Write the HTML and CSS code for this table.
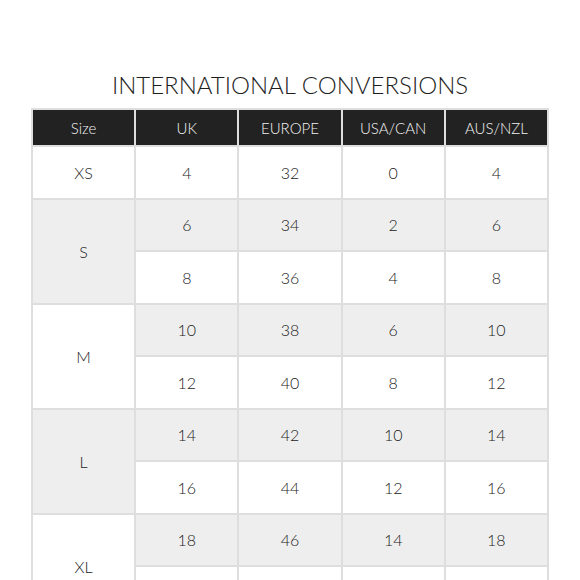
FILE: index.html
```html
<!DOCTYPE html>
<html>
<head>
<meta charset="utf-8">
<link rel="stylesheet" href="styles.css">
</head>
<body>
<h1 class="title">INTERNATIONAL CONVERSIONS</h1>
<table class="chart">
  <thead>
    <tr><th>Size</th><th>UK</th><th>EUROPE</th><th>USA/CAN</th><th>AUS/NZL</th></tr>
  </thead>
  <tbody>
    <tr><td class="size">XS</td><td>4</td><td>32</td><td>0</td><td>4</td></tr>
    <tr class="shade"><td class="size shade" rowspan="2">S</td><td>6</td><td>34</td><td>2</td><td>6</td></tr>
    <tr><td>8</td><td>36</td><td>4</td><td>8</td></tr>
    <tr class="shade"><td class="size plain" rowspan="2">M</td><td>10</td><td>38</td><td>6</td><td>10</td></tr>
    <tr><td>12</td><td>40</td><td>8</td><td>12</td></tr>
    <tr class="shade"><td class="size shade" rowspan="2">L</td><td>14</td><td>42</td><td>10</td><td>14</td></tr>
    <tr><td>16</td><td>44</td><td>12</td><td>16</td></tr>
    <tr class="shade"><td class="size plain" rowspan="2">XL</td><td>18</td><td>46</td><td>14</td><td>18</td></tr>
    <tr><td>20</td><td>48</td><td>16</td><td>20</td></tr>
  </tbody>
</table>
</body>
</html>
```
FILE: styles.css
```css
html, body {
  margin: 0;
  padding: 0;
  background: #fff;
}
body {
  font-family: Lato, "Open Sans", sans-serif;
  color: #333;
  padding-top: 70px;
}
.title {
  margin: 0 0 9px 0;
  text-align: center;
  font-size: 24px;
  font-weight: 300;
  line-height: 29px;
  color: #1e1e1e;
  letter-spacing: 0;
}
.chart {
  border-collapse: collapse;
  margin: 0 0 0 31px;
  width: 518px;
  table-layout: fixed;
}
.chart th, .chart td {
  border: 2px solid #dedede;
  text-align: center;
  padding: 0;
}
.chart th {
  background: #222;
  color: #f2f2f2;
  font-size: 15px;
  font-weight: 300;
  height: 35px;
}
.chart td {
  font-size: 16px;
  font-weight: 300;
  height: 50.5px;
  color: #222;
}
.chart tr.shade td {
  background: #eeeeee;
}
.chart td.size.plain {
  background: #fff;
}
.chart td.size.shade {
  background: #eeeeee;
}
```
